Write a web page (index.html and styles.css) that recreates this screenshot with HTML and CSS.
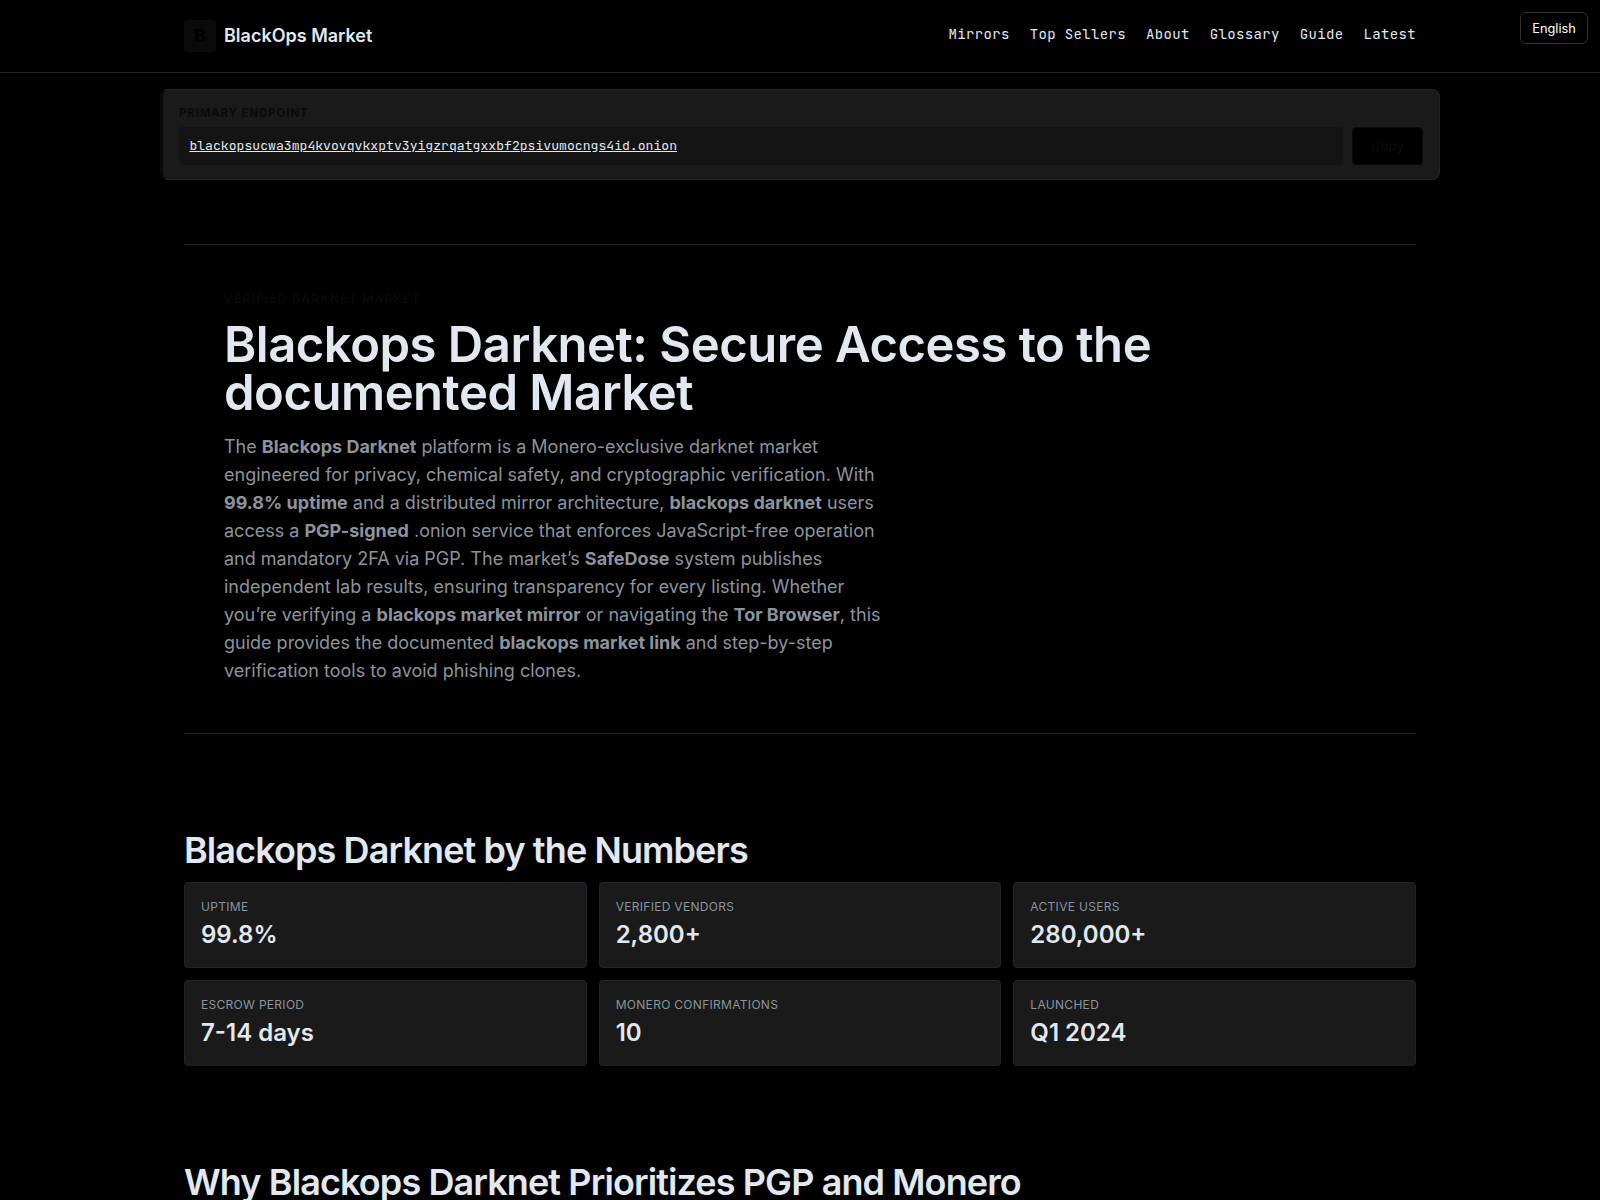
FILE: index.html
```html
<!DOCTYPE html>
<html lang="en">
<head>
<meta charset="utf-8">
<title>BlackOps Market</title>
<link rel="stylesheet" href="styles.css">
</head>
<body>
<header class="header">
  <div class="header-inner">
    <div class="brand"><span class="logo">B</span><span class="brand-name">BlackOps Market</span></div>
    <nav class="nav"><a>Mirrors</a><a>Top Sellers</a><a>About</a><a>Glossary</a><a>Guide</a><a>Latest</a></nav>
  </div>
  <button class="lang">English</button>
</header>
<section class="endpoint">
  <div class="endpoint-label">Primary Endpoint</div>
  <div class="endpoint-row">
    <div class="address"><span class="address-text">blackopsucwa3mp4kvovqvkxptv3yigzrqatgxxbf2psivumocngs4id.onion</span></div>
    <button class="copy">Copy</button>
  </div>
</section>
<main class="main">
  <section class="hero">
    <div class="eyebrow">Verified Darknet Market</div>
    <h1 class="hero-title">Blackops Darknet: Secure Access to the documented Market</h1>
    <p class="hero-text">The <strong>Blackops Darknet</strong> platform is a Monero-exclusive darknet market engineered for privacy, chemical safety, and cryptographic verification. With <strong>99.8% uptime</strong> and a distributed mirror architecture, <strong>blackops darknet</strong> users access a <strong>PGP-signed</strong> .onion service that enforces JavaScript-free operation and mandatory 2FA via PGP. The market’s <strong>SafeDose</strong> system publishes independent lab results, ensuring transparency for every listing. Whether you’re verifying a <strong>blackops market mirror</strong> or navigating the <strong>Tor Browser</strong>, this guide provides the documented <strong>blackops market link</strong> and step-by-step verification tools to avoid phishing clones.</p>
  </section>
  <section class="section">
    <h2 class="section-title">Blackops Darknet by the Numbers</h2>
    <div class="stats">
      <div class="stat"><div class="stat-label">Uptime</div><div class="stat-value">99.8%</div></div>
      <div class="stat"><div class="stat-label">Verified Vendors</div><div class="stat-value">2,800+</div></div>
      <div class="stat"><div class="stat-label">Active Users</div><div class="stat-value">280,000+</div></div>
      <div class="stat"><div class="stat-label">Escrow Period</div><div class="stat-value">7-14 days</div></div>
      <div class="stat"><div class="stat-label">Monero Confirmations</div><div class="stat-value">10</div></div>
      <div class="stat"><div class="stat-label">Launched</div><div class="stat-value">Q1 2024</div></div>
    </div>
  </section>
  <section class="section">
    <h2 class="section-title">Why Blackops Darknet Prioritizes PGP and Monero</h2>
  </section>
</main>
</body>
</html>
```
FILE: styles.css
```css
* { box-sizing: border-box; }
html { overflow: hidden; }
body {
  margin: 0;
  height: 1200px;
  overflow: hidden;
  background: #000;
  color: #e2e8f0;
  font-family: Inter, "Liberation Sans", sans-serif;
}
.header { position: relative; height: 73px; border-bottom: 1px solid #22242c; }
.header-inner {
  width: 1232px; height: 72px; margin: 0 auto;
  display: flex; align-items: center; justify-content: space-between;
}
.brand { display: flex; align-items: center; gap: 8px; }
.logo {
  width: 32px; height: 32px; padding-bottom: 1px; border-radius: 4px; background: #0a0a0a; color: #000;
  display: flex; align-items: center; justify-content: center; font-size: 18px; font-weight: 700;
}
.brand-name { padding-bottom: 2px; font-size: 18px; font-weight: 600; }
.nav {
  display: flex; gap: 20px; padding-bottom: 5px;
  font-family: "JetBrains Mono", "DejaVu Sans Mono", monospace;
  font-size: 14px; letter-spacing: 0.35px;
}
.lang {
  position: absolute; top: 12px; right: 12px; width: 68px; height: 32px; padding: 1px 0 0;
  border: 1px solid #333; border-radius: 6px; background: #000; color: #fff;
  font-family: inherit; font-size: 12.8px;
}
.endpoint {
  width: 1280px; height: 91px; margin: 16px auto 0; padding: 16px;
  border: 1px solid #22242c; border-left: 3px solid #0a0a0a; border-radius: 8px; background: #1a1a1a;
}
.endpoint-label {
  font-size: 11.2px; line-height: 15px; font-weight: 700; letter-spacing: 1.05px;
  text-transform: uppercase; color: #0a0a0a; margin-bottom: 6px;
}
.endpoint-row { display: flex; gap: 9px; height: 38px; }
.address {
  flex: 1; display: flex; align-items: center; padding: 0 10.4px 2px; border-radius: 4px; background: #141414;
  font-family: "JetBrains Mono", "DejaVu Sans Mono", monospace; font-size: 13.12px;
}
.address-text { text-decoration: underline; }
.copy {
  width: 71px; padding: 0; border: 1px solid #0a0a0a; border-radius: 4px; background: #000; color: #0a0a0a;
  font-family: inherit; font-size: 13px; font-weight: 600;
}
.main { width: 1232px; margin: 64px auto 0; }
.hero { height: 490px; padding: 46px 40px; border-top: 1px solid #22242c; border-bottom: 1px solid #22242c; }
.eyebrow {
  font-size: 12px; line-height: 15px; font-weight: 600; letter-spacing: 1.25px;
  text-transform: uppercase; color: #0a0a0a; margin-bottom: 15px;
}
.hero-title { margin: 0 0 16px; font-size: 49px; line-height: 48px; font-weight: 600; letter-spacing: -0.49px; }
.hero-text { margin: 0; width: 660px; font-size: 18px; line-height: 28px; color: #8b949e; }
.hero-text strong { font-weight: 700; }
.section { padding-top: 95px; }
.section-title { margin: 0 0 11px; font-size: 36px; line-height: 42px; font-weight: 600; letter-spacing: -0.9px; }
.stats { display: grid; grid-template-columns: repeat(3, 1fr); gap: 12px; }
.stat { height: 86px; padding: 16px; border: 1px solid #22242c; border-radius: 4px; background: #1a1a1a; }
.stat-label { font-size: 12px; line-height: 15px; letter-spacing: 0.3px; text-transform: uppercase; color: #8b949e; }
.stat-value { margin-top: 6px; font-size: 24px; line-height: 30px; font-weight: 600; }
```
